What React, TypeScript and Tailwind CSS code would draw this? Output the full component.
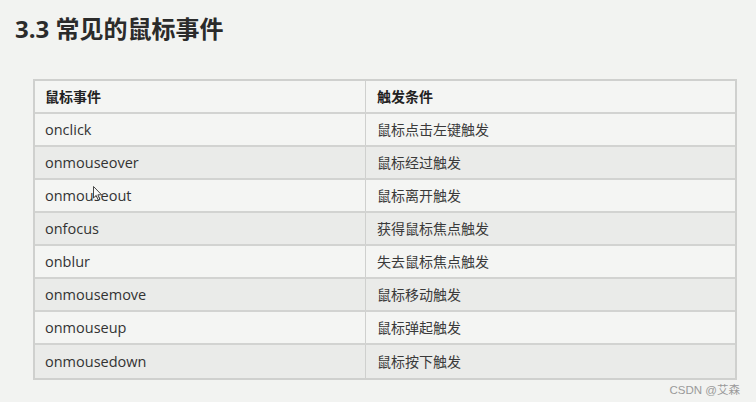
import React from 'react';

const rows = [
   { event: 'onclick', cond: '鼠标点击左键触发' },
   { event: 'onmouseover', cond: '鼠标经过触发' },
   { event: 'onmouseout', cond: '鼠标离开触发' },
   { event: 'onfocus', cond: '获得鼠标焦点触发' },
   { event: 'onblur', cond: '失去鼠标焦点触发' },
   { event: 'onmousemove', cond: '鼠标移动触发' },
   { event: 'onmouseup', cond: '鼠标弹起触发' },
   { event: 'onmousedown', cond: '鼠标按下触发' },
];

const font = {
   fontFamily: '"Open Sans", "Noto Sans CJK SC", sans-serif',
};

export default function App() {
   return (
      <div
         className="relative h-[402px] w-[756px] overflow-hidden bg-[#f2f3f1] text-[#333]"
         style={font}
      >
         <h1 className="pl-[15px] pt-[13px] text-[24px] font-bold leading-[32px] text-[#2b2b2b]">
            3.3 常见的鼠标事件
         </h1>
         <div className="ml-[33px] mt-[34px] w-[704px] border-2 border-[#cfd0ce]">
            <div className="grid h-[33px] grid-cols-[331px_1fr] border-b-2 border-[#d2d3d1] bg-[#f4f5f3] text-[14px] font-bold text-[#222]">
               <div className="flex items-center border-r border-[#cfd0ce] pl-[10px]">
                  鼠标事件
               </div>
               <div className="flex items-center pl-[11px]">触发条件</div>
            </div>
            {rows.map(({ event, cond }, i) => (
               <div
                  key={event}
                  className={`grid h-[33px] grid-cols-[331px_1fr] text-[14.5px] ${
                     i < rows.length - 1 ? 'border-b-2 border-[#d2d3d1]' : ''
                  } ${i % 2 === 1 ? 'bg-[#eaebe9]' : 'bg-[#f4f5f3]'}`}
               >
                  <div className="flex items-center border-r border-[#cfd0ce] pl-[10px]">
                     {event}
                  </div>
                  <div className="flex items-center pl-[11px] text-[14px] text-[#3a3a3a]">
                     {cond}
                  </div>
               </div>
            ))}
         </div>
         <div
            className="mt-[3px] pr-[16px] text-right text-[11.5px] leading-[14px] text-[#9a9a9a]"
            style={{ fontFamily: '"Liberation Sans", "Noto Sans CJK SC", sans-serif' }}
         >
            CSDN @艾森
         </div>
         {/* mouse pointer caught in the screenshot */}
         <svg
            className="absolute left-[93px] top-[186px]"
            width="10"
            height="16"
            viewBox="0 0 10 16"
         >
            <path
               d="M0.5 0.5 L0.5 12 L3.2 9.4 L5.2 14 L6.8 13.3 L4.9 8.8 L8.6 8.8 Z"
               fill="#fafafa"
               stroke="#333"
               strokeWidth="0.9"
            />
         </svg>
      </div>
   );
}
